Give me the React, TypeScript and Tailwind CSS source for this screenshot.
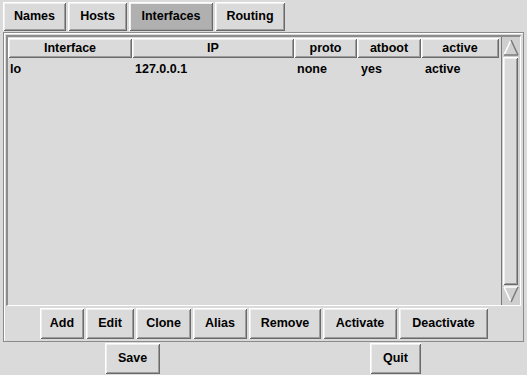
import React from "react";

const raised =
  "shadow-[inset_1px_1px_0_#ffffff,inset_-1px_-1px_0_#6a6a6a,inset_2px_2px_0_#efefef,inset_-2px_-2px_0_#9c9c9c]";

function Btn({ label, w, active }: { label: string; w: number; active?: boolean }) {
  return (
    <div
      style={{ width: w }}
      className={
        "h-full flex items-center justify-center " +
        raised +
        (active ? " bg-[#b0b0b0]" : " bg-[#dadada]")
      }
    >
      {label}
    </div>
  );
}

function Head({ label, w }: { label: string; w: number }) {
  return (
    <div
      style={{ width: w }}
      className={"h-full flex items-center justify-center bg-[#dadada] " + raised}
    >
      {label}
    </div>
  );
}

function Arrow({ up }: { up?: boolean }) {
  return (
    <div className="h-[19px] w-full flex items-center justify-center">
      <svg width="16" height="17" viewBox="0 0 16 17">
        {up ? (
          <>
            <polygon points="8,1 15,16 1,16" fill="#d0d0d0" />
            <line x1="8" y1="1" x2="1" y2="16" stroke="#ffffff" strokeWidth="1.5" />
            <line x1="1" y1="16" x2="15" y2="16" stroke="#7a7a7a" strokeWidth="1.5" />
            <line x1="8" y1="1" x2="15" y2="16" stroke="#7a7a7a" strokeWidth="1.5" />
          </>
        ) : (
          <>
            <polygon points="1,1 15,1 8,16" fill="#d0d0d0" />
            <line x1="1" y1="1" x2="15" y2="1" stroke="#ffffff" strokeWidth="1.5" />
            <line x1="1" y1="1" x2="8" y2="16" stroke="#ffffff" strokeWidth="1.5" />
            <line x1="15" y1="1" x2="8" y2="16" stroke="#7a7a7a" strokeWidth="1.5" />
          </>
        )}
      </svg>
    </div>
  );
}

export default function App() {
  return (
    <div
      className="w-[527px] h-[375px] bg-[#dadada] text-black font-bold text-[12.5px] leading-none flex flex-col overflow-hidden"
      style={{ fontFamily: '"Liberation Sans", Arial, sans-serif' }}
    >
      {/* tabs */}
      <div className="flex gap-[2px] pl-[3px] pt-[2px] h-[31px]">
        <Btn label="Names" w={63} />
        <Btn label="Hosts" w={59} />
        <Btn label="Interfaces" w={84} active />
        <Btn label="Routing" w={70} />
      </div>

      {/* main frame */}
      <div className="ml-[3px] mt-[1px] w-[521px] h-[310px] border border-[#8a8a8a] shadow-[inset_1px_1px_0_#ffffff] p-[1px] flex flex-col">
        {/* listbox */}
        <div className="h-[271px] ml-[1px] mt-[1px] mr-[1px] flex border-t-2 border-l-2 border-t-[#8c8c8c] border-l-[#8c8c8c] border-b border-r border-b-white border-r-white">
          <div className="flex-1 flex flex-col pt-[1px]">
            <div className="flex h-[20px]">
              <Head label="Interface" w={124} />
              <Head label="IP" w={162} />
              <Head label="proto" w={63} />
              <Head label="atboot" w={64} />
              <Head label="active" w={78} />
            </div>
            <div className="flex h-[21px] items-center pt-[2px]">
              <div className="w-[124px] pl-[2px]">lo</div>
              <div className="w-[162px] pl-[3px]">127.0.0.1</div>
              <div className="w-[63px] pl-[3px]">none</div>
              <div className="w-[64px] pl-[4px]">yes</div>
              <div className="w-[78px] pl-[4px]">active</div>
            </div>
          </div>
          {/* scrollbar */}
          <div className="w-[19px] flex flex-col border-l border-l-[#7a7a7a] pt-[1px] pb-[1px] pr-[1px] bg-[#cfcfcf]">
            <Arrow up />
            <div className={"flex-1 bg-[#dadada] mx-[1px] " + raised} />
            <Arrow />
          </div>
        </div>
        {/* button row */}
        <div className="flex-1 flex gap-[2px] pt-[2px] pb-[1px] pl-[35px]">
          <Btn label="Add" w={44} />
          <Btn label="Edit" w={48} />
          <Btn label="Clone" w={55} />
          <Btn label="Alias" w={54} />
          <Btn label="Remove" w={72} />
          <Btn label="Activate" w={74} />
          <Btn label="Deactivate" w={89} />
        </div>
      </div>

      {/* bottom row */}
      <div className="flex pt-[1px] pl-[1px] h-[32px]">
        <div className="flex-1 flex justify-center">
          <Btn label="Save" w={55} />
        </div>
        <div className="flex-1 flex justify-center">
          <Btn label="Quit" w={51} />
        </div>
      </div>
    </div>
  );
}
